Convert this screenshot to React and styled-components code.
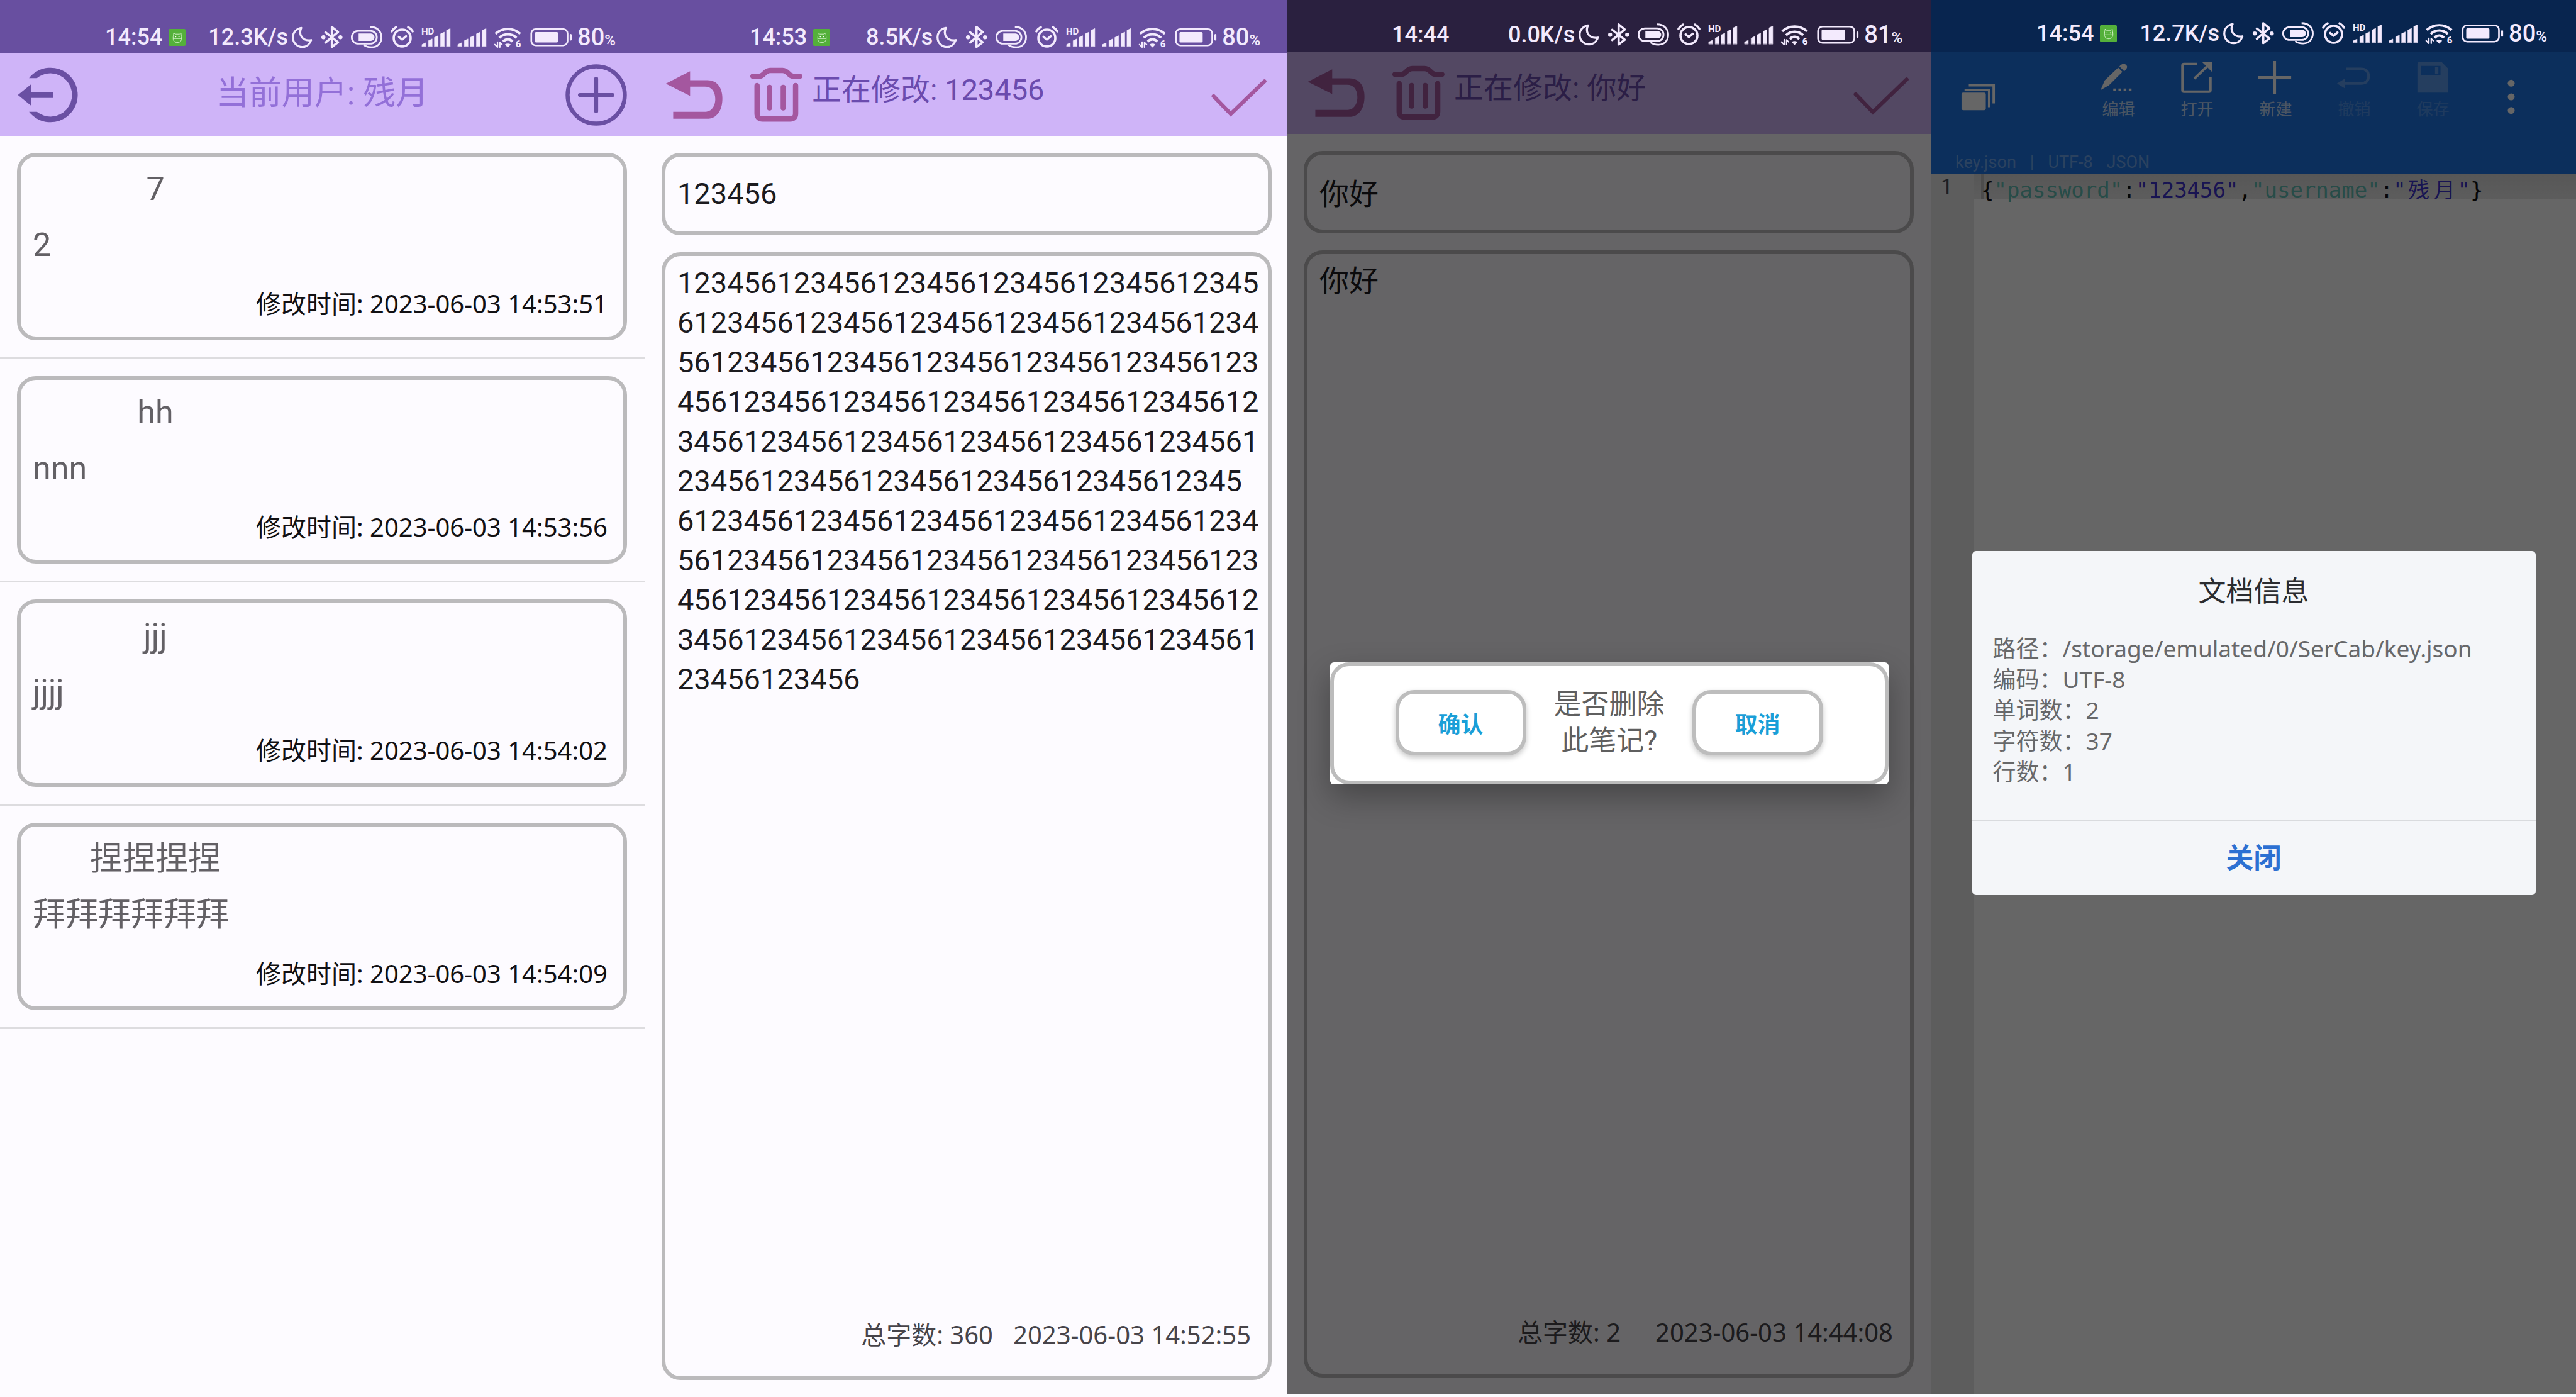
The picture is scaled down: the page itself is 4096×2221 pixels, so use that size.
import React from "react";
import styled, { createGlobalStyle } from "styled-components";

const SANS = `Roboto, "Noto Sans CJK SC", sans-serif`;
const WIDE_SANS = `"Noto Sans", "Noto Sans CJK SC", sans-serif`;
const MONO = `"DejaVu Sans Mono", "Noto Sans CJK SC", monospace`;

const GlobalStyle = createGlobalStyle`
  *, *::before, *::after { box-sizing: border-box; }
  html, body, #root { height: 100%; }
  body { margin: 0; background: #fdfbff; font-family: ${SANS}; }
  button { padding: 0; border: 0; background: none; font: inherit; color: inherit; cursor: pointer; }
  h1, h2, p, dl, dd, ul, pre { margin: 0; padding: 0; font-weight: 400; }
  svg { display: block; overflow: visible; }
`;

/* ---------- page and phone screens ---------- */

const Board = styled.main`
  display: grid;
  grid-template-columns: 1080fr 1076fr 1080fr 1080fr;
  min-height: 100vh;
`;

const Screen = styled.section`
  --edge: ${(p) => (p.$cropped ? 24 : 28)}px;
  display: flex;
  flex-direction: column;
  min-width: 0;
  margin-bottom: ${(p) => (p.$raised ? 4 : 0)}px;
  background: ${(p) => p.$bg || "#fdfbff"};
`;

const Stage = styled.div`
  position: relative;
  flex: 1;
  display: flex;
  flex-direction: column;
`;

const Scrim = styled.div`
  position: absolute;
  inset: 0;
  display: flex;
  align-items: center;
  justify-content: center;
  background: rgba(0, 0, 0, 0.6);
`;

/* ---------- status bar ---------- */

const Bar = styled.div`
  display: flex;
  align-items: center;
  height: ${(p) => p.$height}px;
  padding: ${(p) => p.$top}px calc(var(--edge) + 18px) 0 167px;
  background: ${(p) => p.$bg};
  color: #f3eafd;
  font-size: 36px;
  font-weight: 500;
  line-height: 40px;
  white-space: nowrap;
`;

const Badge = styled.span`
  display: flex;
  margin-left: 10px;
`;

const Speed = styled.span`
  margin-left: auto;
`;

const Indicators = styled.div`
  display: flex;
  align-items: center;
  gap: 10px;
  margin: 0 7px 0 3px;
`;

const Charge = styled.span`
  font-size: 38px;
`;

const Percent = styled.small`
  font-size: 24px;
  line-height: 30px;
`;

const Glyph = ({ w, px, children }) => (
  <svg width={px} height="38" viewBox={`0 0 ${w} 40`} fill="none" stroke="currentColor" strokeWidth="3.4" strokeLinecap="round" strokeLinejoin="round" aria-hidden="true">
    {children}
  </svg>
);

const MoonGlyph = () => (
  <Glyph w={40} px={38}>
    <path d="M19 4.5C14 15 20 27.500 35.500 25C33 32.500 27 36.500 20.500 36.500A15.500 16 0 0 1 5 20.500C5 12.500 10.500 6 19 4.500Z" />
  </Glyph>
);

const BluetoothGlyph = () => (
  <Glyph w={40} px={38}>
    <path d="M9 12L30 28.500L19.700 36.500V3L30 11.500L9 29" strokeWidth="3.800" />
    <circle cx="5.500" cy="20.300" r="3.400" fill="currentColor" stroke="none" />
    <circle cx="34" cy="20.300" r="3.400" fill="currentColor" stroke="none" />
  </Glyph>
);

const CastGlyph = () => (
  <Glyph w={56} px={53}>
    <rect x="2.500" y="9.500" width="42" height="21.500" rx="10.700" strokeWidth="3" />
    <path d="M14 14H34.500a6.200 6.200 0 0 1 0 12.400H14Z" fill="currentColor" stroke="none" />
    <path d="M33.500 2.800C46 2.800 52.300 11 52.300 20.300C52.300 30 46 37 36 37C30 37 26.500 36 22.500 33" strokeWidth="3" strokeLinecap="butt" />
  </Glyph>
);

const AlarmGlyph = () => (
  <Glyph w={42} px={40}>
    <circle cx="20.500" cy="21.500" r="14.200" strokeWidth="3.800" />
    <path d="M3 10.500Q5.500 6 10.500 3.200M38 10.500Q35.500 6 30.500 3.200" strokeWidth="3.800" />
    <path d="M15 19.500L20.500 24L27 18.500" strokeWidth="3.800" />
  </Glyph>
);

const BARS = [
  [1, 29.5],
  [12, 23],
  [22, 17.5],
  [32.5, 11.5],
  [42.5, 5.5],
];

const SignalGlyph = ({ hd }) => (
  <Glyph w={50} px={47}>
    {BARS.map(([x, y]) => (
      <path key={x} d={`M${x} 35.800V${y + 3}L${x + 6.3} ${y}V35.800Z`} fill="currentColor" strokeWidth="0.600" />
    ))}
    {hd && (
      <text x="0" y="16" fill="currentColor" stroke="none" fontSize="16" fontWeight="700" fontFamily="Roboto, sans-serif">
        HD
      </text>
    )}
  </Glyph>
);

const WifiGlyph = () => (
  <Glyph w={50} px={47}>
    <path d="M4 14.500Q13 6.300 25 6.300Q37 6.300 46 14.500M10.500 21.300Q16.500 15.300 25 15.300Q33.500 15.300 39.500 21.300M17 27.500Q20.500 23.800 25 23.800Q29.500 23.800 33 27.500" strokeWidth="4.200" strokeLinecap="butt" />
    <path d="M20 32.500Q25 29.500 30 32.500L25 37.500Z" fill="currentColor" stroke="none" />
    <path d="M7.500 28.500V37L3 32.500M11.500 37V29L15 32.500" strokeWidth="2.400" />
    <text x="38" y="37" fill="currentColor" stroke="none" fontSize="16" fontWeight="800" fontFamily="Roboto, sans-serif">
      6
    </text>
  </Glyph>
);

const BatteryGlyph = () => (
  <Glyph w={74} px={70}>
    <rect x="4" y="6.500" width="61" height="27.500" rx="7.500" strokeWidth="2.800" />
    <rect x="10" y="11.500" width="39" height="17.500" rx="2" fill="currentColor" stroke="none" />
    <path d="M70.300 16.500V24" strokeWidth="3.400" />
  </Glyph>
);

const RobotBadge = () => (
  <svg width="27" height="27" viewBox="0 0 28 28" aria-hidden="true">
    <rect width="28" height="28" rx="2" fill="#54b03a" />
    <path d="M7.500 15.500C7.500 11.500 8 10 8.500 6.500L11 8.500H18L20.500 6.500C21 10 21.500 11.500 21.500 15.500C21.500 20 18.500 22.500 14.500 22.500S7.500 20 7.500 15.500ZM7.500 15.800H21.500" fill="none" stroke="#d5f2cb" strokeWidth="1" />
    <circle cx="11.800" cy="12.800" r="1" fill="#fff" />
    <circle cx="17.200" cy="12.800" r="1" fill="#fff" />
  </svg>
);

function StatusBar({ time, speed, charge, badge = true, bg = "#684fa0", height = 85, top = 33 }) {
  return (
    <Bar $bg={bg} $height={height} $top={top}>
      <time>{time}</time>
      {badge && (
        <Badge>
          <RobotBadge />
        </Badge>
      )}
      <Speed>{speed}</Speed>
      <Indicators>
        <MoonGlyph />
        <BluetoothGlyph />
        <CastGlyph />
        <AlarmGlyph />
        <SignalGlyph hd />
        <SignalGlyph />
        <WifiGlyph />
        <BatteryGlyph />
      </Indicators>
      <Charge>
        {charge}
        <Percent>%</Percent>
      </Charge>
    </Bar>
  );
}

/* ---------- note app header ---------- */

const Header = styled.header`
  display: flex;
  align-items: center;
  height: 131px;
  padding: 0 var(--edge) 0 28px;
  background: #cfb4f8;
`;

const IconButton = styled.button`
  flex: none;
  width: 98px;
  height: 98px;
  color: ${(p) => p.$color || "#6a4fa3"};
  & + & { margin-left: 33px; }
`;

const UserTitle = styled.h1`
  flex: 1;
  padding-bottom: 4px;
  color: #9370d8;
  font-size: 52px;
  line-height: 64px;
  text-align: center;
`;

const EditTitle = styled.h1`
  flex: 1;
  padding: 0 0 16px 9px;
  color: #6b4bae;
  font-size: 47px;
  line-height: 60px;
`;

const HeaderIcon = ({ children }) => (
  <svg width="98" height="98" viewBox="0 0 104 104" fill="none" stroke="currentColor" strokeLinecap="round" aria-hidden="true">
    {children}
  </svg>
);

const ExitIcon = () => (
  <HeaderIcon>
    <path d="M19.300 23.500A46 46 0 1 1 19.300 80.500H32.500A36.500 36.500 0 1 0 32.500 23.500ZM0.500 52L22.700 34V47H59.600V57H22.700V70Z" fill="currentColor" stroke="none" />
  </HeaderIcon>
);

const AddIcon = () => (
  <HeaderIcon>
    <circle cx="52" cy="52" r="48.300" strokeWidth="6.800" />
    <path d="M52 24.500V79.500M24.500 52H79.500" strokeWidth="6.600" />
  </HeaderIcon>
);

const BackIcon = () => (
  <HeaderIcon>
    <path d="M6 33L47 12V27H76C93 27 101.500 40 101.500 58C101.500 78 92 92 76 92H18.500V80.500H72C84 80.500 89.500 70 89.500 59C89.500 46 83 38 72 38H47V53.700Z" fill="currentColor" stroke="none" />
  </HeaderIcon>
);

const TrashIcon = () => (
  <HeaderIcon>
    <path d="M14 20.500H25C33 20.500 33 10.500 43 10.500H64C74 10.500 74 20.500 82 20.500H93" strokeWidth="9" />
    <path d="M21 36V83Q21 92.500 30.500 92.500H76.500Q86 92.500 86 83V36" strokeWidth="9" />
    <path d="M42 39V74M65 39V74" strokeWidth="8.500" />
  </HeaderIcon>
);

const CheckIcon = () => (
  <HeaderIcon>
    <path d="M6 54L35 84L92 29" strokeWidth="6.600" />
  </HeaderIcon>
);

/* ---------- note list ---------- */

const NoteList = styled.ul`
  list-style: none;
`;

const NoteItem = styled.li`
  padding: 27px var(--edge) 27px 27px;
  border-bottom: 3px solid #dddcdf;
`;

const Note = styled.article`
  display: flex;
  flex-direction: column;
  height: 298px;
  padding: 17px 25px 25px 19px;
  border: 6px solid #bbbabc;
  border-radius: 30px;
  color: #636065;
  font-size: 52px;
  line-height: 70px;
`;

const NoteTitle = styled.h2`
  width: 390px;
  margin-bottom: 19px;
  font-size: inherit;
  text-align: center;
`;

const NoteTime = styled.p`
  margin-top: auto;
  color: #111013;
  font-family: ${WIDE_SANS};
  font-size: 40px;
  line-height: 54px;
  text-align: right;
`;

const NOTES = [
  { title: "7", body: "2", time: "2023-06-03 14:53:51" },
  { title: "hh", body: "nnn", time: "2023-06-03 14:53:56" },
  { title: "jjj", body: "jjjj", time: "2023-06-03 14:54:02" },
  { title: "捏捏捏捏", body: "拜拜拜拜拜拜", time: "2023-06-03 14:54:09" },
];

function ListScreen() {
  return (
    <Screen>
      <StatusBar time="14:54" speed="12.3K/s" charge="80" />
      <Header>
        <IconButton type="button" aria-label="退出">
          <ExitIcon />
        </IconButton>
        <UserTitle>当前用户: 残月</UserTitle>
        <IconButton type="button" aria-label="新建">
          <AddIcon />
        </IconButton>
      </Header>
      <NoteList>
        {NOTES.map((n) => (
          <NoteItem key={n.time}>
            <Note>
              <NoteTitle>{n.title}</NoteTitle>
              <p>{n.body}</p>
              <NoteTime>修改时间: {n.time}</NoteTime>
            </Note>
          </NoteItem>
        ))}
      </NoteList>
    </Screen>
  );
}

/* ---------- note editor ---------- */

const Form = styled.form`
  flex: 1;
  display: flex;
  flex-direction: column;
  gap: 27px;
  padding: 27px var(--edge) 27px 27px;
`;

const TitleInput = styled.input`
  width: 100%;
  height: 131px;
  padding: 0 19px 2px;
  border: 6px solid #bbbabc;
  border-radius: 30px;
  background: transparent;
  color: #1c1b1f;
  font: 400 47px/63px ${SANS};
  outline: 0;
`;

const BodyBox = styled.div`
  flex: 1;
  display: flex;
  flex-direction: column;
  padding: 11px 3px 41px 19px;
  border: 6px solid #bbbabc;
  border-radius: 30px;
`;

const BodyInput = styled.textarea`
  flex: 1;
  width: 100%;
  padding: 0;
  border: 0;
  background: transparent;
  color: #1c1b1f;
  font: 400 47px/63px ${SANS};
  resize: none;
  outline: 0;
  overflow: hidden;
  white-space: pre;
`;

const Meta = styled.footer`
  display: flex;
  justify-content: flex-end;
  padding-right: 12px;
  color: #47444a;
  font-family: ${WIDE_SANS};
  font-size: 40px;
  line-height: 50px;
  white-space: nowrap;
`;

const Count = styled.span`
  width: 274px;
  text-align: center;
`;

const Stamp = styled.time`
  width: 390px;
`;

function Editor({ title, body, count, stamp }) {
  return (
    <>
      <Header>
        <IconButton type="button" aria-label="返回" $color="#a4579f">
          <BackIcon />
        </IconButton>
        <IconButton type="button" aria-label="删除" $color="#a4579f">
          <TrashIcon />
        </IconButton>
        <EditTitle>正在修改: {title}</EditTitle>
        <IconButton type="button" aria-label="保存" $color="#a4579f">
          <CheckIcon />
        </IconButton>
      </Header>
      <Form>
        <TitleInput aria-label="标题" defaultValue={title} />
        <BodyBox>
          <BodyInput aria-label="内容" defaultValue={body} spellCheck={false} />
          <Meta>
            <Count>总字数: {count}</Count>
            <Stamp>{stamp}</Stamp>
          </Meta>
        </BodyBox>
      </Form>
    </>
  );
}

const LINE_LENGTHS = [35, 35, 35, 35, 35, 34, 35, 35, 35, 35, 11];

const LONG_BODY = LINE_LENGTHS.reduce(
  (acc, len) => ({
    pos: acc.pos + len,
    lines: [...acc.lines, "123456".repeat(60).slice(acc.pos, acc.pos + len)],
  }),
  { pos: 0, lines: [] }
).lines.join("\n");

/* ---------- delete dialog ---------- */

const ConfirmCard = styled.div`
  width: 888px;
  border-radius: 6px;
  background: #fff;
  box-shadow: 0 20px 50px rgba(0, 0, 0, 0.3);
`;

const ConfirmFrame = styled.div`
  display: flex;
  align-items: center;
  justify-content: space-between;
  height: 194px;
  padding: 0 98px 2px;
  border: 6px solid #bcbcbc;
  border-radius: 30px;
`;

const ConfirmText = styled.p`
  color: #5f5f5f;
  font-size: 44px;
  line-height: 58px;
  text-align: center;
`;

const ConfirmButton = styled.button`
  width: 208px;
  height: 104px;
  border: 6px solid #bdbdbd;
  border-radius: 30px;
  background: #fff;
  box-shadow: 0 4px 8px rgba(0, 0, 0, 0.22);
  color: #1a9fd8;
  font-size: 36px;
  font-weight: 700;
`;

/* ---------- text editor app ---------- */

const ToolHeader = styled.header`
  display: flex;
  flex-direction: column;
  height: 195px;
  background: #2076e6;
  color: #fff;
`;

const Tools = styled.div`
  display: flex;
  padding: 13px 40px 0 11px;
`;

const Tool = styled.button`
  display: flex;
  flex-direction: column;
  align-items: center;
  gap: 8px;
  width: 125px;
  font-size: 26px;
  line-height: 30px;
  opacity: ${(p) => (p.disabled ? 0.28 : 1)};
  span { opacity: 0.7; }
`;

const PlainTool = styled(Tool)`
  justify-content: center;
  height: 118px;
  margin-right: ${(p) => (p.$first ? "auto" : "0")};
`;

const FileInfo = styled.p`
  display: flex;
  gap: 22px;
  margin-top: auto;
  padding-left: 38px;
  color: rgba(255, 255, 255, 0.36);
  font-size: 27px;
  line-height: 38px;
`;

const Doc = styled.div`
  flex: 1;
  display: grid;
  grid-template-columns: 68px 1fr;
  grid-template-rows: 40px 1fr;
  background: #fefefe;
`;

const LineNumber = styled.div`
  grid-row: 1 / -1;
  padding-right: 34px;
  background: #e8e8e8;
  color: #494e5a;
  font-size: 34px;
  line-height: 38px;
  text-align: right;
`;

const CodeLine = styled.pre`
  height: 40px;
  padding-left: 11px;
  background: linear-gradient(#d9d9d9, #e8e8e8);
  color: #111;
  font: 400 34px/50px ${MONO};
`;

const Caret = styled.span`
  display: inline-block;
  width: 5px;
  height: 40px;
  margin-right: -5px;
  background: #bdbdbd;
  vertical-align: top;
`;

const Key = styled.span`
  color: #62bdb4;
`;

const Str = styled.span`
  color: #3c32cc;
`;

const Wide = styled.span`
  display: inline-block;
  width: 2ch;
  text-align: center;
`;

const InfoCard = styled.div`
  width: 896px;
  border-radius: 6px;
  background: #f4f6f9;
`;

const InfoTitle = styled.h2`
  padding-top: 35px;
  color: #2a2c30;
  font-size: 44px;
  line-height: 60px;
  text-align: center;
`;

const InfoList = styled.dl`
  padding: 35px 33px 53px;
  color: #67686a;
  font-family: ${WIDE_SANS};
  font-size: 37px;
  line-height: 49px;
  div { display: flex; }
`;

const CloseButton = styled.button`
  width: 100%;
  height: 119px;
  padding-bottom: 6px;
  border-top: 1px solid #d9dbde;
  color: #2c70d2;
  font-size: 44px;
  font-weight: 700;
`;

const ToolIcon = ({ children }) => (
  <svg width="56" height="56" viewBox="0 0 58 58" fill="none" stroke="currentColor" strokeWidth="4" aria-hidden="true">
    {children}
  </svg>
);

const EditGlyph = () => (
  <ToolIcon>
    <path d="M0 50L7 34L29 13L36 20L14 42Z" fill="currentColor" stroke="none" />
    <path d="M31 11Q37 4 42.500 8.500Q46 13 39 19Z" fill="currentColor" stroke="none" />
    <path d="M21 49.500H52" strokeDasharray="4.500 4" />
  </ToolIcon>
);

const OpenGlyph = () => (
  <ToolIcon>
    <path d="M30 7H8Q5.500 7 5.500 9.500V50Q5.500 52.500 8 52.500H49Q51.500 52.500 51.500 50V29M25 31L47 10" strokeWidth="4.200" />
    <path d="M38 4H54V20Z" fill="currentColor" stroke="none" />
  </ToolIcon>
);

const NewGlyph = () => (
  <ToolIcon>
    <path d="M28 2V56M1 29H55" strokeWidth="4.200" />
  </ToolIcon>
);

const RevertGlyph = () => (
  <ToolIcon>
    <path d="M16 15H40Q53 15 53 27Q53 39 40 39H10" strokeWidth="4.200" />
    <path d="M1 39L14 31V47Z" fill="currentColor" stroke="none" />
  </ToolIcon>
);

const SaveGlyph = () => (
  <ToolIcon>
    <path fillRule="evenodd" d="M7 4H44L54 14V54H4V7Q4 4 7 4ZM10 10V26H42V10ZM33 11.500H38.500V23.500H33Z" fill="currentColor" stroke="none" />
  </ToolIcon>
);

const StackGlyph = () => (
  <ToolIcon>
    <rect x="2" y="22" width="40" height="29" rx="2.500" fill="currentColor" stroke="none" />
    <path d="M7 17.500H47.500V46M14 10H55V40" />
  </ToolIcon>
);

const DotsGlyph = () => (
  <svg width="12" height="56" viewBox="0 0 12 58" fill="currentColor" aria-hidden="true">
    <circle cx="6" cy="6.500" r="5.700" />
    <circle cx="6" cy="29" r="5.700" />
    <circle cx="6" cy="51.500" r="5.700" />
  </svg>
);

const TOOLS = [
  { label: "编辑", Icon: EditGlyph },
  { label: "打开", Icon: OpenGlyph },
  { label: "新建", Icon: NewGlyph },
  { label: "撤销", Icon: RevertGlyph, disabled: true },
  { label: "保存", Icon: SaveGlyph, disabled: true },
];

const INFO = [
  ["路径：", "/storage/emulated/0/SerCab/key.json"],
  ["编码：", "UTF-8"],
  ["单词数：", "2"],
  ["字符数：", "37"],
  ["行数：", "1"],
];

function JsonScreen() {
  return (
    <Screen $raised $bg="#656565">
      <StatusBar time="14:54" speed="12.7K/s" charge="80" bg="#08254f" height={82} top={24} />
      <Stage>
        <ToolHeader>
          <Tools>
            <PlainTool type="button" aria-label="文件" $first>
              <StackGlyph />
            </PlainTool>
            {TOOLS.map(({ label, Icon, disabled }) => (
              <Tool type="button" key={label} disabled={disabled}>
                <Icon />
                <span>{label}</span>
              </Tool>
            ))}
            <PlainTool type="button" aria-label="更多">
              <DotsGlyph />
            </PlainTool>
          </Tools>
          <FileInfo>
            <span>key.json</span>
            <span>|</span>
            <span>UTF-8</span>
            <span>JSON</span>
          </FileInfo>
        </ToolHeader>
        <Doc>
          <LineNumber>1</LineNumber>
          <CodeLine>
            <Caret />
            {"{"}
            <Key>"password"</Key>:<Str>"123456"</Str>,<Key>"username"</Key>:
            <Str>
              "<Wide>残</Wide>
              <Wide>月</Wide>"
            </Str>
            {"}"}
          </CodeLine>
        </Doc>
        <Scrim>
          <InfoCard role="dialog" aria-labelledby="info-title">
            <InfoTitle id="info-title">文档信息</InfoTitle>
            <InfoList>
              {INFO.map(([name, value]) => (
                <div key={name}>
                  <dt>{name}</dt>
                  <dd>{value}</dd>
                </div>
              ))}
            </InfoList>
            <CloseButton type="button">关闭</CloseButton>
          </InfoCard>
        </Scrim>
      </Stage>
    </Screen>
  );
}

export default function App() {
  return (
    <>
      <GlobalStyle />
      <Board>
        <ListScreen />
        <Screen $cropped>
          <StatusBar time="14:53" speed="8.5K/s" charge="80" />
          <Editor title="123456" body={LONG_BODY} count="360" stamp="2023-06-03 14:52:55" />
        </Screen>
        <Screen $raised>
          <StatusBar time="14:44" speed="0.0K/s" charge="81" badge={false} bg="#2a203f" height={82} top={28} />
          <Stage>
            <Editor title="你好" body="你好" count="2" stamp="2023-06-03 14:44:08" />
            <Scrim>
              <ConfirmCard role="dialog" aria-label="是否删除此笔记?">
                <ConfirmFrame>
                  <ConfirmButton type="button">确认</ConfirmButton>
                  <ConfirmText>
                    是否删除
                    <br />
                    此笔记?
                  </ConfirmText>
                  <ConfirmButton type="button">取消</ConfirmButton>
                </ConfirmFrame>
              </ConfirmCard>
            </Scrim>
          </Stage>
        </Screen>
        <JsonScreen />
      </Board>
    </>
  );
}
